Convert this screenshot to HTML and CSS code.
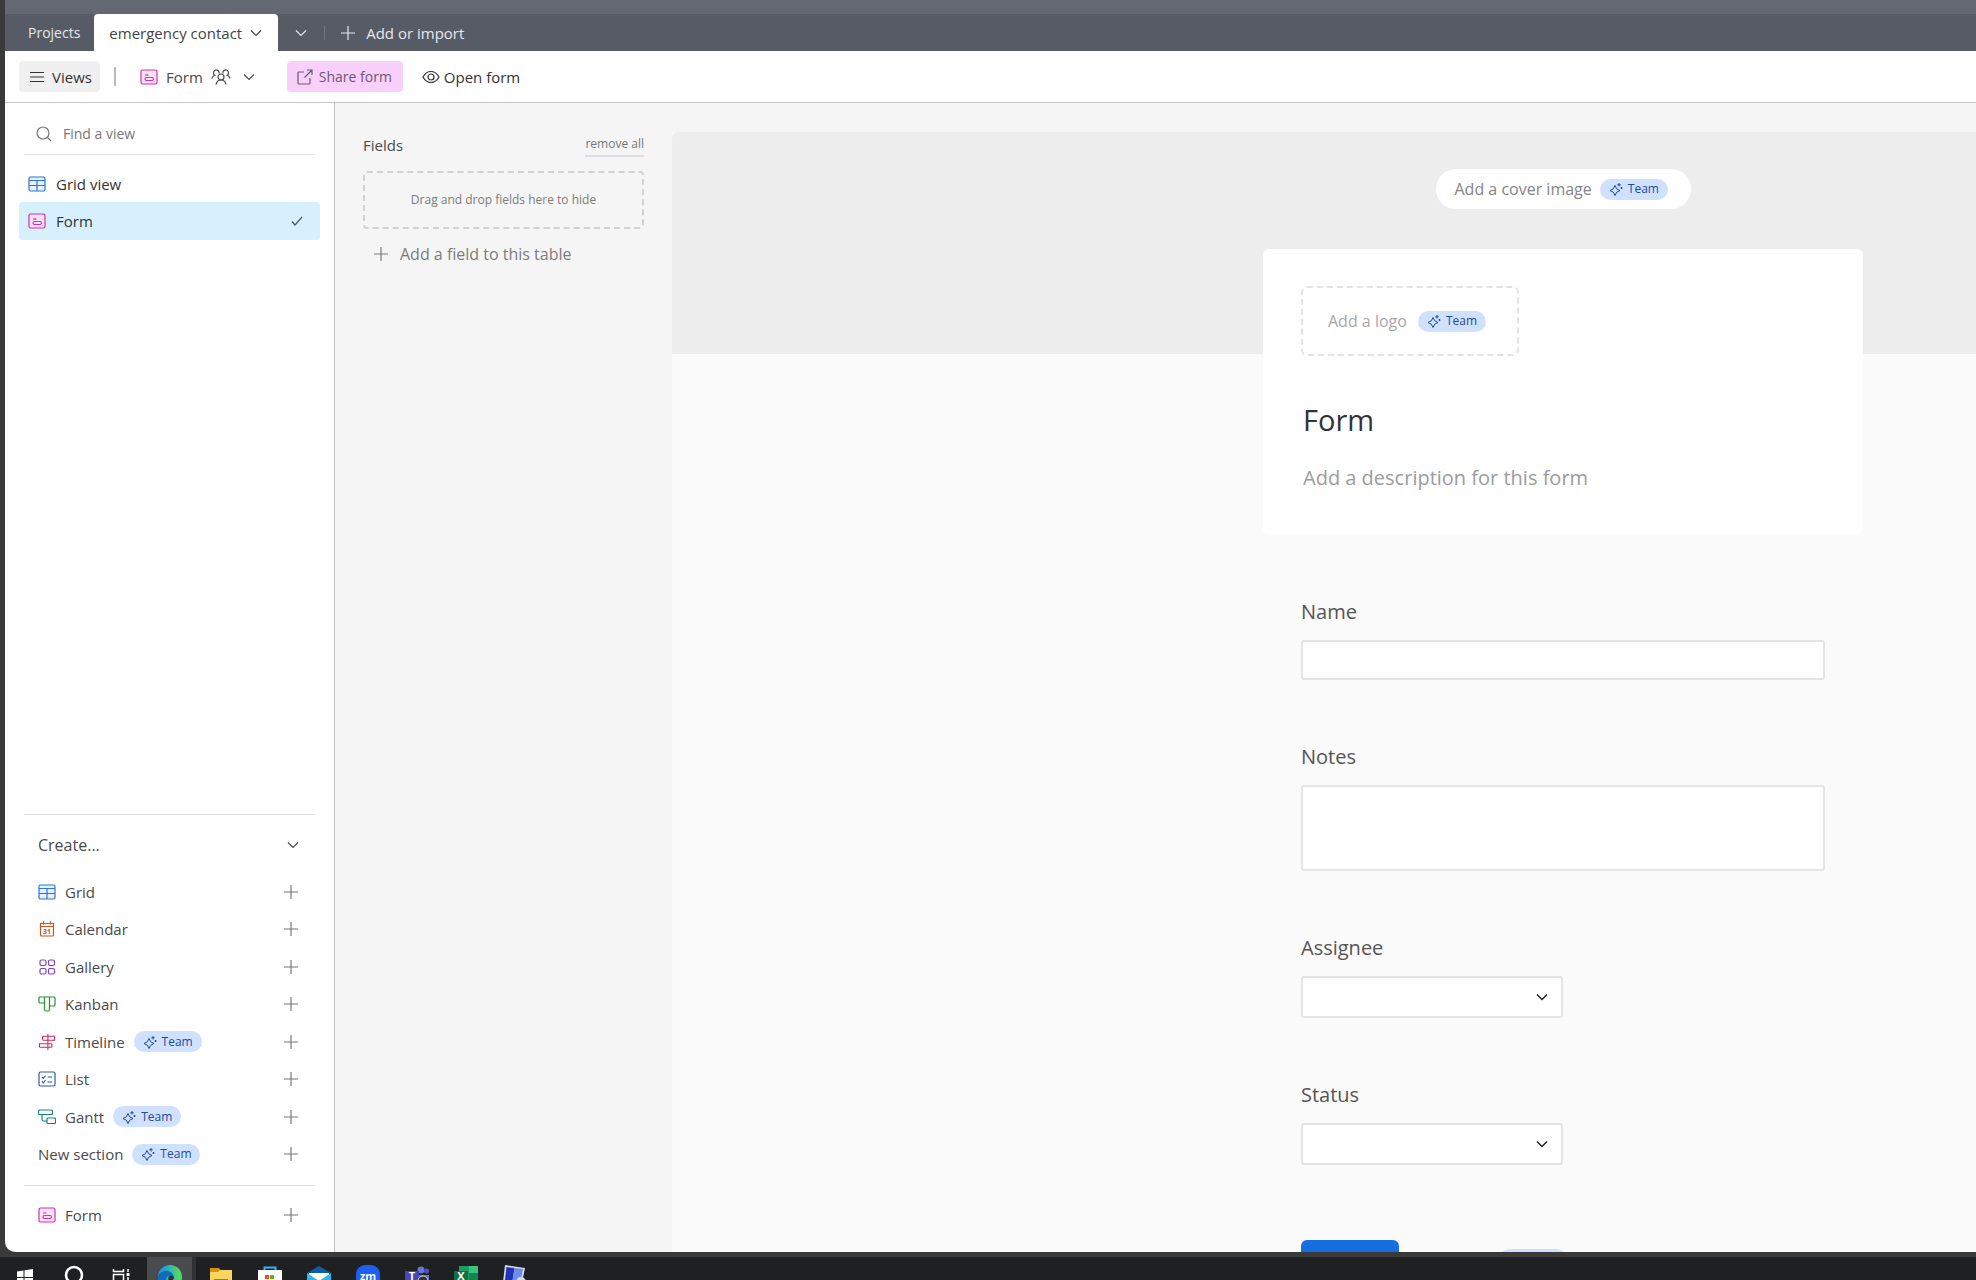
FILE: index.html
```
<!DOCTYPE html>
<html lang="en">
<head>
    <meta charset="UTF-8">
    <meta name="viewport" content="width=device-width, initial-scale=1.0">
    <title>emergency contact: Form</title>
    <link rel="stylesheet" href="styles.css">
</head>
<body>

<!-- Shared icons -->
<svg class="sprite" aria-hidden="true">
    <symbol id="i-chevron" viewBox="0 0 12 8"><path d="M1 1.5l5 5 5-5" /></symbol>
    <symbol id="i-plus" viewBox="0 0 16 16"><path d="M8 1v14M1 8h14" /></symbol>
    <symbol id="i-grid" viewBox="0 0 18 16"><rect x="1" y="1" width="16" height="14" rx="1.5" fill="#e6f0ff" /><path d="M1 4.5h16M1 9.5h16M9 4.5V15" /></symbol>
    <symbol id="i-form" viewBox="0 0 18 16"><rect x="1" y="1" width="16" height="14" rx="1.5" fill="#fbe3f6" /><path d="M5 6h3.500" /><rect x="5" y="8.500" width="8.500" height="3" rx="1.500" /></symbol>
    <symbol id="i-gallery" viewBox="0 0 18 16"><rect x="2" y="1" width="6" height="5.500" rx="1.500" /><rect x="10.500" y="1" width="6" height="5.500" rx="1.500" /><rect x="2" y="9.500" width="6" height="5.500" rx="1.500" /><rect x="10.500" y="9.500" width="6" height="5.500" rx="1.500" /></symbol>
    <symbol id="i-kanban" viewBox="0 0 18 16"><path d="M2 1h14a1 1 0 0 1 1 1v7a1 1 0 0 1-1 1h-4.500v3.500a1.500 1.500 0 0 1-1.500 1.500H8a1.500 1.500 0 0 1-1.500-1.500V1M11.500 1v9M6.500 7H2a1 1 0 0 1-1-1V2a1 1 0 0 1 1-1" /></symbol>
    <symbol id="i-timeline" viewBox="0 0 18 18"><path d="M10 0v18M17.500 2.500H5a1 1 0 0 0-1 1V6a1 1 0 0 0 1 1h12.500V2.500M0.500 11v3a1 1 0 0 0 1 1h12a1 1 0 0 0 1-1v-2a1 1 0 0 0-1-1z" /></symbol>
    <symbol id="i-list" viewBox="0 0 18 16"><rect x="1" y="1" width="16" height="14" rx="1.500" /><path d="M4 6l1.300 1.300L7.500 4.500M4 10.500l1.300 1.300 2.200-2.800M9.500 6H14M9.500 11H14" /></symbol>
    <symbol id="i-gantt" viewBox="0 0 18 16"><rect x="0.500" y="1" width="14" height="4.500" rx="1" /><path d="M4 5.500v5A1.500 1.500 0 0 0 5.500 12H9" /><rect x="9" y="9" width="8.500" height="5.500" rx="1" /></symbol>
    <symbol id="i-spark" viewBox="0 0 14 14"><path d="M6 3.500L7.700 6.800 11 8.500 7.700 10.200 6 13.500 4.300 10.200 1 8.500 4.300 6.800z" /><path d="M10 1v3.500M8.300 2.800h3.400M12.500 5v2M11.500 6h2" /></symbol>
    <symbol id="i-people" viewBox="0 0 20 16"><circle cx="10" cy="8" r="3" /><path d="M5 15.500c.5-3 2.500-4.500 5-4.500s4.500 1.500 5 4.500M8 4.500A2.800 2.800 0 1 0 4.500 6.500C2.500 6.500 1.300 7.500 1 9.500M12 4.500a2.800 2.800 0 1 1 3.500 2c2 0 3.200 1 3.500 3" /></symbol>
</svg>

<div class="window">
    <nav class="tabs" aria-label="Tables">
        <a class="tab" href="#">Projects</a>
        <a class="tab active" href="#">emergency contact <svg class="icon chevron"><use href="#i-chevron" /></svg></a>
        <button class="tab-more" aria-label="All tables"><svg class="icon chevron"><use href="#i-chevron" /></svg></button>
        <button class="tab-add"><svg class="icon plus"><use href="#i-plus" /></svg> Add or import</button>
    </nav>

    <div class="toolbar">
        <button class="tool views">
            <svg class="icon" width="14" height="12" viewBox="0 0 14 12"><path d="M0 1.500h14M0 6h14M0 10.500h14" /></svg>
            Views
        </button>
        <span class="divider"></span>
        <button class="tool current">
            <svg class="icon type pink"><use href="#i-form" /></svg>
            Form
            <svg class="icon people"><use href="#i-people" /></svg>
            <svg class="icon chevron"><use href="#i-chevron" /></svg>
        </button>
        <button class="tool share">
            <svg class="icon" width="16" height="16" viewBox="0 0 16 16"><path d="M7 3H2a1 1 0 0 0-1 1v10a1 1 0 0 0 1 1h10a1 1 0 0 0 1-1V9M7.500 8.500L15 1M10 1h5v5" /></svg>
            Share form
        </button>
        <button class="tool open">
            <svg class="icon" width="18" height="14" viewBox="0 0 18 14"><path d="M1 7c2-3.700 4.700-5.500 8-5.500S15 3.300 17 7c-2 3.700-4.700 5.500-8 5.500S3 10.700 1 7z" /><circle cx="9" cy="7" r="3" /></svg>
            Open form
        </button>
    </div>

    <div class="content">
        <aside class="sidebar">
            <div class="search">
                <svg class="icon" width="16" height="16" viewBox="0 0 16 16"><circle cx="7" cy="7" r="6" /><path d="M11.500 11.500L15 15" /></svg>
                <input type="text" placeholder="Find a view" aria-label="Find a view">
            </div>
            <nav class="view-list" aria-label="Views">
                <a href="#"><svg class="icon type blue"><use href="#i-grid" /></svg> Grid view</a>
                <a class="selected" href="#"><svg class="icon type pink"><use href="#i-form" /></svg> Form
                    <svg class="icon check" width="12" height="10" viewBox="0 0 12 10"><path d="M1 5.500L4 9l7-8" /></svg>
                </a>
            </nav>

            <div class="create">
                <button class="create-head">Create... <svg class="icon chevron"><use href="#i-chevron" /></svg></button>
                <div class="create-list">
                    <button><svg class="icon type blue"><use href="#i-grid" /></svg> Grid <svg class="icon plus"><use href="#i-plus" /></svg></button>
                    <button><svg class="icon type orange" viewBox="0 0 18 16"><path d="M2.500 2.500h13V14a1 1 0 0 1-1 1h-11a1 1 0 0 1-1-1zM2.500 5.500h13M5.500 0v3.500M12.500 0v3.500" /><text x="9" y="13" text-anchor="middle" class="tiny">31</text></svg> Calendar <svg class="icon plus"><use href="#i-plus" /></svg></button>
                    <button><svg class="icon type purple"><use href="#i-gallery" /></svg> Gallery <svg class="icon plus"><use href="#i-plus" /></svg></button>
                    <button><svg class="icon type green"><use href="#i-kanban" /></svg> Kanban <svg class="icon plus"><use href="#i-plus" /></svg></button>
                    <button><svg class="icon type red"><use href="#i-timeline" /></svg> Timeline <span class="badge"><svg class="icon"><use href="#i-spark" /></svg>Team</span> <svg class="icon plus"><use href="#i-plus" /></svg></button>
                    <button><svg class="icon type navy"><use href="#i-list" /></svg> List <svg class="icon plus"><use href="#i-plus" /></svg></button>
                    <button><svg class="icon type teal"><use href="#i-gantt" /></svg> Gantt <span class="badge"><svg class="icon"><use href="#i-spark" /></svg>Team</span> <svg class="icon plus"><use href="#i-plus" /></svg></button>
                    <button>New section <span class="badge"><svg class="icon"><use href="#i-spark" /></svg>Team</span> <svg class="icon plus"><use href="#i-plus" /></svg></button>
                </div>
                <div class="create-form">
                    <button><svg class="icon type pink"><use href="#i-form" /></svg> Form <svg class="icon plus"><use href="#i-plus" /></svg></button>
                </div>
            </div>
        </aside>

        <section class="fields">
            <div class="fields-head">
                <h2>Fields</h2>
                <button class="remove-all">remove all</button>
            </div>
            <div class="drop-zone">Drag and drop fields here to hide</div>
            <button class="add-field"><svg class="icon plus"><use href="#i-plus" /></svg> Add a field to this table</button>
        </section>

        <main class="page">
            <div class="cover">
                <div class="column">
                    <button class="cover-btn">Add a cover image <span class="badge"><svg class="icon"><use href="#i-spark" /></svg>Team</span></button>
                </div>
            </div>
            <form class="column">
                <header class="card">
                    <button type="button" class="logo-btn">Add a logo <span class="badge"><svg class="icon"><use href="#i-spark" /></svg>Team</span></button>
                    <h1>Form</h1>
                    <p>Add a description for this form</p>
                </header>
                <div class="field">
                    <label for="name">Name</label>
                    <input type="text" id="name">
                </div>
                <div class="field">
                    <label for="notes">Notes</label>
                    <textarea id="notes"></textarea>
                </div>
                <div class="field">
                    <label for="assignee">Assignee</label>
                    <div class="select">
                        <select id="assignee"><option></option></select>
                        <svg class="icon"><use href="#i-chevron" /></svg>
                    </div>
                </div>
                <div class="field">
                    <label for="status">Status</label>
                    <div class="select">
                        <select id="status"><option></option></select>
                        <svg class="icon"><use href="#i-chevron" /></svg>
                    </div>
                </div>
                <div class="form-footer">
                    <button class="submit" aria-label="Submit"></button>
                    <span class="badge"></span>
                </div>
            </form>
        </main>
    </div>
</div>

<footer class="taskbar">
    <button aria-label="Start"><svg viewBox="0 0 24 24"><path fill="#fff" d="M4 6.500l6.500-1V12H4zM11.500 5.300L20 4v8h-8.500zM4 13h6.500v6.500L4 18.500zM11.500 13H20v8l-8.500-1.300z" /></svg></button>
    <button aria-label="Search"><svg viewBox="0 0 24 24"><circle cx="12" cy="10" r="8" fill="none" stroke="#fff" stroke-width="2.500" /></svg></button>
    <button aria-label="Task view"><svg viewBox="0 0 24 24"><path fill="none" stroke="#fff" stroke-width="1.500" d="M2.500 4v2.500h10V4M2.500 18V9.500h10V18M17 4v3M17 12v7" /><path fill="#fff" d="M15.500 8h3v3h-3z" /></svg></button>
    <button class="running" aria-label="Browser"><svg viewBox="0 0 24 24"><defs><linearGradient id="edge" x1="0" x2="1"><stop offset="0.2" stop-color="#1e9fe0" /><stop offset="0.9" stop-color="#55d860" /></linearGradient></defs><circle cx="12" cy="12" r="12" fill="url(#edge)" /><path fill="#0f6cbd" d="M0 12c1-5 6-7 10-6s6 4 6 7c-3-4-7-3-8 1s1 7 4 9C5 24 0 19 0 12z" /><path fill="#29333a" d="M11 11c2-1 4 0 5 2-1 2-2 4-4 4-2-1-2-4-1-6z" /></svg></button>
    <button aria-label="Files"><svg viewBox="0 0 24 24"><path fill="#d9930b" d="M1 3h9l2 3h11v6H1z" /><path fill="#fcd462" d="M1 7h8l2-2h12v16H1z" /><path fill="#3a8fd0" d="M5 14h14v7H5z" /></svg></button>
    <button aria-label="Store"><svg viewBox="0 0 24 24"><path fill="none" stroke="#35b5ee" stroke-width="2" d="M6.500 7V2.500h11V7" /><path fill="#fff" d="M0 5h24v17H0z" /><path fill="#e8502c" d="M7 10h4v4H7z" /><path fill="#6cab1f" d="M12 10h4v4h-4z" /></svg></button>
    <button aria-label="Mail"><svg viewBox="0 0 24 24"><path fill="#0f5ba7" d="M12 1l12 7v6H0V8z" /><path fill="#fff" d="M2 8h20v10H2z" /><path fill="#31b4ee" d="M0 8l12 8 12-8v14H0z" /></svg></button>
    <button aria-label="Zoom"><svg viewBox="0 0 24 24"><rect width="24" height="24" rx="9" fill="#1c5ff2" /><text x="12" y="15" text-anchor="middle" class="logo-text">zm</text></svg></button>
    <button aria-label="Chat"><svg viewBox="0 0 24 24"><circle cx="16" cy="5" r="3.500" fill="#6b72d8" /><circle cx="21.500" cy="6" r="2.500" fill="#4b53bc" /><path fill="#6b72d8" d="M12 10h12v10H12z" /><path fill="#4549b5" d="M0 6h14v14H0z" /><text x="7" y="15" text-anchor="middle" class="logo-text">T</text><circle cx="18" cy="16" r="5" fill="#333" stroke="#ccc" /></svg></button>
    <button aria-label="Spreadsheet"><svg viewBox="0 0 24 24"><path fill="#1f9d60" d="M5 1h10v21H5z" /><path fill="#35c481" d="M15 1h9v7h-9z" /><path fill="#158250" d="M15 8h9v14h-9z" /><path fill="#0f7040" d="M0 6h14v14H0z" /><text x="7" y="15" text-anchor="middle" class="logo-text">X</text></svg></button>
    <button aria-label="Remote desktop"><svg viewBox="0 0 24 24"><path fill="#d5d8e2" d="M2 0l20 3-3 15L0 17z" /><path fill="#1c35b8" d="M3.500 2l8 1-2 13-7.500-1z" /><path fill="#6f8ce8" d="M11.500 3l8.500 1-2.500 12H9.500z" /><circle cx="18" cy="17" r="5" fill="#d7dae0" /></svg></button>
</footer>

</body>
</html>
```
FILE: styles.css
```
/* Reset Styles */
* {
    margin: 0;
    padding: 0;
    box-sizing: border-box;
}

body {
    font-family: "Open Sans", "Noto Sans", sans-serif;
    font-size: 15px;
    line-height: 20px;
    color: #4a4a4a;
    background: #3a3a3b;
    height: 100vh;
    display: flex;
    flex-direction: column;
    overflow: hidden;
}

a {
    color: inherit;
    text-decoration: none;
}

button,
input,
textarea,
select {
    font: inherit;
    color: inherit;
    border: none;
    background: none;
}

button {
    display: flex;
    align-items: center;
    cursor: pointer;
    white-space: nowrap;
}

/* Icons */
.sprite {
    position: absolute;
    width: 0;
    height: 0;
}

.icon {
    flex: none;
    fill: none;
    stroke: currentColor;
    stroke-width: 1.2;
}

.icon.type {
    width: 18px;
    height: 16px;
}

.icon.chevron {
    width: 12px;
    height: 8px;
}

.icon.plus {
    width: 16px;
    height: 16px;
}

.icon.people {
    width: 20px;
    height: 16px;
}

.tiny {
    font-size: 7px;
    font-weight: 700;
    fill: currentColor;
    stroke: none;
}

.blue { color: #2f74d0; }
.pink { color: #d630b0; }
.orange { color: #cf5420; }
.purple { color: #7c43d0; }
.green { color: #2b922f; }
.red { color: #d3265c; }
.navy { color: #2c5ca8; }
.teal { color: #178377; }

.badge {
    display: inline-flex;
    align-items: center;
    gap: 5px;
    width: 68px;
    height: 21px;
    padding-left: 9px;
    border-radius: 11px;
    background: #d0e1ff;
    color: #1c4b9b;
    font-size: 12px;
    font-weight: 500;
    line-height: 20px;
}

.badge .icon {
    width: 14px;
    height: 14px;
    stroke-width: 1;
}

/* Window */
.window {
    flex: 1;
    min-height: 0;
    margin-left: 5px;
    display: flex;
    flex-direction: column;
    background: #fff;
    border-bottom-left-radius: 10px;
    overflow: hidden;
}

/* Tabs */
.tabs {
    display: flex;
    height: 51px;
    flex: none;
    background: #575b66;
    border-top: 14px solid #636873;
    color: #e6e7e9;
}

.tab {
    display: flex;
    align-items: center;
    gap: 8px;
    padding: 0 14px 0 23px;
    font-size: 14px;
}

.tab.active {
    padding: 0 16px 0 15px;
    background: #fff;
    border-radius: 4px 4px 0 0;
    color: #444;
    font-size: 15px;
}

.tab-more {
    padding: 0 17px;
}

.tab-add {
    gap: 10px;
    padding-left: 16px;
    background: linear-gradient(#73767f, #73767f) no-repeat left center / 1px 14px;
}

/* Toolbar */
.toolbar {
    display: flex;
    align-items: center;
    flex: none;
    height: 52px;
    padding-left: 14px;
    border-bottom: 1px solid #c4c4c4;
}

.tool {
    height: 31px;
    border-radius: 4px;
    gap: 8px;
}

.views {
    width: 81px;
    padding-left: 11px;
    background: #f0f0f0;
    color: #333;
}

.divider {
    width: 2px;
    height: 19px;
    margin: 0 24px 0 14px;
    background: #bbb;
}

.current .chevron {
    margin-left: 4px;
}

.share {
    width: 116px;
    margin: 0 19px 0 32px;
    padding-left: 10px;
    gap: 6px;
    background: #f9d0fb;
    color: #6b5a6d;
    font-size: 14px;
}

.open {
    gap: 4px;
    color: #333;
}

.content {
    display: flex;
    flex: 1;
    min-height: 0;
}

/* Sidebar */
.sidebar {
    display: flex;
    flex-direction: column;
    flex: none;
    width: 330px;
    padding: 10px 14px 18px;
    border-right: 1px solid #c4c4c4;
}

.search {
    display: flex;
    align-items: center;
    gap: 11px;
    height: 42px;
    margin: 0 5px 10px;
    padding-left: 12px;
    border-bottom: 1px solid #dedede;
    color: #777;
}

.search input {
    flex: 1;
    min-width: 0;
    font-size: 14px;
    outline: none;
}

.search input::placeholder {
    color: #777;
}

.view-list a {
    display: flex;
    align-items: center;
    gap: 10px;
    height: 37px;
    padding: 0 17px 0 9px;
    border-radius: 4px;
    color: #333;
}

.view-list .selected {
    height: 38px;
    background: #d6f0fd;
}

.check {
    margin-left: auto;
    color: #555;
}

.create {
    margin: auto 5px 0;
    border-top: 1px solid #dedede;
}

.create button {
    width: 100%;
    gap: 9px;
    padding: 0 16px 0 14px;
}

.create button .chevron,
.create button .plus {
    margin-left: auto;
}

.create .plus {
    color: #777;
}

.create .create-head {
    height: 58px;
    padding-top: 2px;
    font-size: 16px;
    font-weight: 500;
}

.create-list {
    display: grid;
    grid-auto-rows: 1fr;
    height: 300px;
    margin-bottom: 12px;
}

.create-form {
    padding-top: 10px;
    border-top: 1px solid #dedede;
}

.create-form button {
    height: 38px;
}

/* Hidden fields panel */
.fields {
    flex: none;
    width: 337px;
    padding: 29px 28px;
    background: #f5f5f5;
}

.fields-head {
    display: flex;
    align-items: flex-start;
    justify-content: space-between;
    height: 39px;
}

.fields h2 {
    font-size: 15px;
    font-weight: 400;
    line-height: 26px;
}

.remove-all {
    height: 25px;
    border-bottom: 2px solid #dedede;
    font-size: 12px;
    color: #777;
}

.drop-zone {
    display: flex;
    align-items: center;
    justify-content: center;
    height: 58px;
    border: 2px dashed #d2d2d2;
    border-radius: 4px;
    font-size: 12px;
    color: #7c7c7c;
}

.add-field {
    gap: 11px;
    margin-top: 15px;
    padding-left: 10px;
    font-size: 16px;
    color: #7c7c7c;
}

/* Form page */
.page {
    flex: 1;
    min-width: 0;
    border-top: 29px solid #f5f5f5;
    background: #fafafa;
    overflow: hidden;
}

.cover {
    height: 222px;
    padding-top: 37px;
    background: #ededed;
    border-top-left-radius: 6px;
}

.column {
    width: 600px;
    margin-left: auto;
    margin-right: 113px;
}

.cover-btn {
    gap: 8px;
    width: 255px;
    height: 40px;
    margin: 0 auto;
    padding-left: 19px;
    border-radius: 20px;
    background: #fff;
    font-size: 16px;
    color: #858585;
}

.card {
    height: 286px;
    margin-top: -105px;
    padding: 37px 38px;
    border-radius: 6px;
    background: #fff;
}

.logo-btn {
    gap: 11px;
    width: 218px;
    height: 70px;
    padding-left: 25px;
    border: 2px dashed #e2e2e2;
    border-radius: 6px;
    font-size: 16px;
    color: #a6a6a6;
}

.card h1 {
    margin-top: 44px;
    padding-left: 2px;
    font-size: 29px;
    font-weight: 500;
    line-height: 40px;
    color: #333;
}

.card p {
    margin-top: 24px;
    padding-left: 2px;
    font-size: 20px;
    line-height: 28px;
    color: #9c9c9c;
}

.field {
    margin-top: 63px;
    padding: 0 38px;
}

.field label {
    display: block;
    margin-bottom: 14px;
    font-size: 20px;
    line-height: 28px;
    color: #555;
}

.field input,
.field textarea,
.field select {
    display: block;
    width: 100%;
    height: 40px;
    padding: 0 10px;
    border: 2px solid #e4e4e4;
    border-radius: 3px;
    background: #fff;
    resize: none;
}

.field textarea {
    height: 86px;
}

.select {
    position: relative;
    width: 50%;
}

.field select {
    height: 42px;
    appearance: none;
}

.select .icon {
    position: absolute;
    right: 15px;
    top: 17px;
    width: 12px;
    height: 8px;
    color: #222;
    stroke-width: 1.5;
    pointer-events: none;
}

.form-footer {
    display: flex;
    align-items: flex-start;
    gap: 100px;
    margin-top: 75px;
    padding: 0 38px;
}

.submit {
    width: 98px;
    height: 40px;
    border-radius: 6px;
    background: #176edf;
}

.form-footer .badge {
    margin-top: 9px;
}

/* Taskbar */
.taskbar {
    display: flex;
    flex: none;
    height: 28px;
    border-top: 5px solid #3a3a3b;
    background: #1f2022;
    overflow: hidden;
}

.taskbar button {
    justify-content: center;
    width: 49px;
    height: 40px;
}

.taskbar svg {
    width: 24px;
    height: 24px;
}

.taskbar .running {
    background: #4a4b4e;
    border-right: 4px solid #303133;
}

.logo-text {
    font-size: 11px;
    font-weight: 700;
    fill: #fff;
}
```
